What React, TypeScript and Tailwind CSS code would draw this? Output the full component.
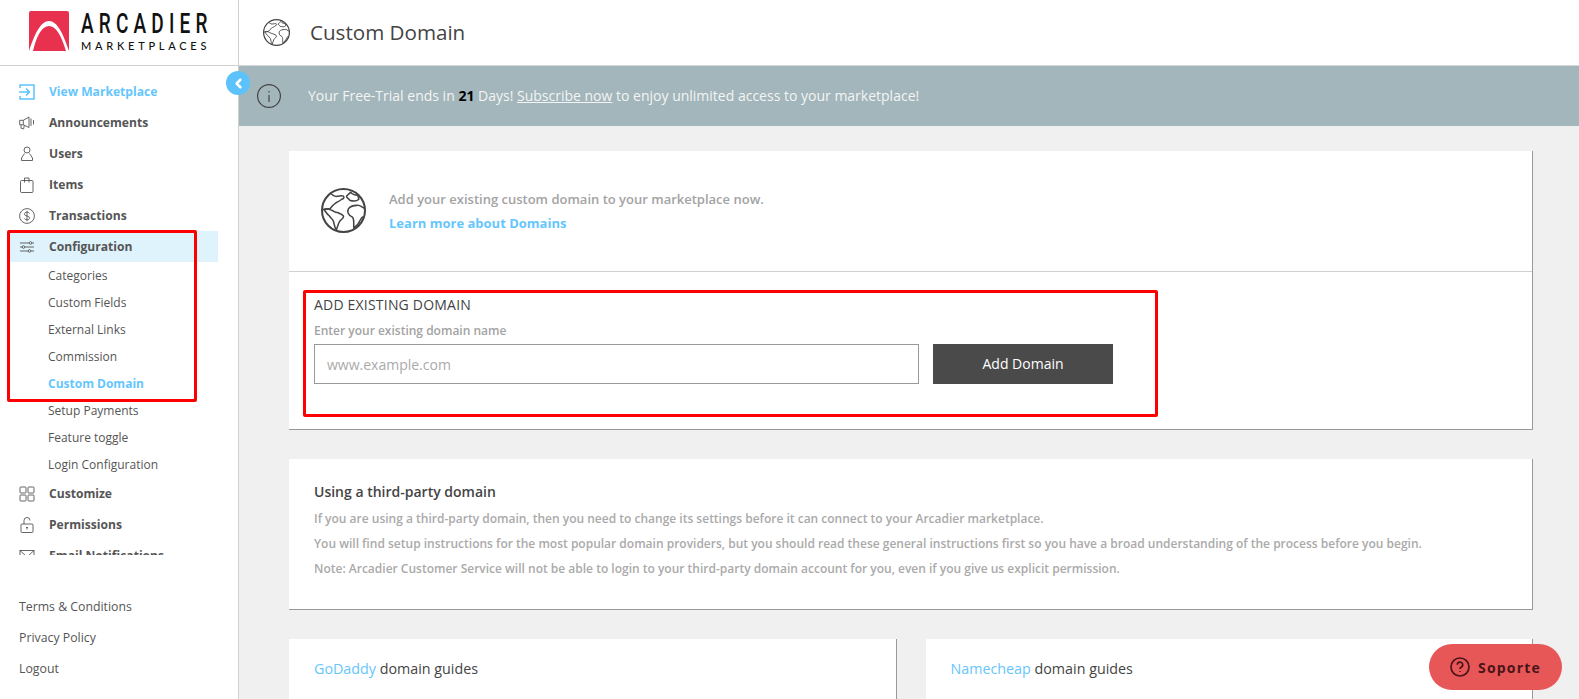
import { ChevronLeft } from "lucide-react";
import type { ReactNode } from "react";

const Icon = ({ children, className = "text-[#555]" }: { children: ReactNode; className?: string }) => (
  <svg viewBox="0 0 16 16" fill="none" stroke="currentColor" strokeWidth="0.9" className={`w-4 h-4 shrink-0 ${className}`}>
    {children}
  </svg>
);

const GlobeIcon = ({ className }: { className: string }) => (
  <svg viewBox="0 0 44 44" fill="none" stroke="#444" strokeLinejoin="round" className={className}>
    <circle cx="22" cy="22" r="21" strokeWidth="2" />
    <path strokeWidth="1.5" d="M10 6c2 1 4 3 6 2 2 0 4-1 6 0 1 1 0 3-2 3-1 2-4 2-6 4-2 1-3 3-5 5-2 1-4 1-7 1" />
    <path strokeWidth="1.5" d="M3 21c3-2 5 0 8 1 2 1 3 2 5 2 2 1 6 2 6 4 0 2-3 3-4 5-1 2-2 5-3 8-2-3-2-6-3-9-1-2-3-3-4-5-2-1-3-3-5-6z" />
    <path strokeWidth="1.5" d="M29 4c2 3 5 3 7 3l1 4c-2 2-6 2-9 1-1-2-3-2-3-4 1-2 3-2 4-4z" />
    <path strokeWidth="1.5" d="M43 20c-3-1-5-4-8-3-3 0-6 1-8 3-2 3 0 7 3 8 2 1 2 3 2 5 0 3 0 5 0 6 3-2 5-4 6-7 1-2 2-3 3-4" />
  </svg>
);

const navTop = [
  {
    label: "Announcements",
    icon: (
      <Icon>
        <path d="M.7 5.3h3.6L10 2v10.5L4.3 9.8H.7z" />
        <path d="M4.3 5.3v4.5M2 9.8v3.4l2.6.8.7-3.7M12 3.5v7.5M14.5 5v4.5" />
      </Icon>
    ),
  },
  {
    label: "Users",
    icon: (
      <Icon>
        <circle cx="8" cy="4" r="3" />
        <path d="M5.5 7.5L2.5 12v2.5h11V12l-3-4.5" />
      </Icon>
    ),
  },
  {
    label: "Items",
    icon: (
      <Icon>
        <rect x="1.5" y="3.5" width="12.5" height="12" rx="1" />
        <path d="M5.5 5.5V1h4.5v4.5" />
      </Icon>
    ),
  },
  {
    label: "Transactions",
    icon: (
      <Icon>
        <circle cx="8" cy="8" r="7.4" />
        <path d="M10.5 5.5C10 4.5 9 4.2 8 4.2c-1.5 0-2.6.8-2.6 1.9 0 2.6 5.2 1.2 5.2 3.8 0 1.1-1.1 1.9-2.6 1.9-1.1 0-2.1-.4-2.6-1.3M8 2.8v10.4" />
      </Icon>
    ),
  },
];

const subItems = ["Categories", "Custom Fields", "External Links", "Commission", "Custom Domain", "Setup Payments", "Feature toggle", "Login Configuration"];

const Row = ({ icon, label, className = "text-[#555]" }: { icon: ReactNode; label: string; className?: string }) => (
  <div className={`flex items-center gap-[14px] h-[31px] pl-[19px] text-[12.1px] font-bold ${className}`}>
    {icon}
    <span className="pt-[2px]">{label}</span>
  </div>
);

const Sidebar = () => (
  <aside className="w-[239px] shrink-0 h-full flex flex-col bg-white border-r border-[#d0d0d0]">
    <div className="h-[66px] shrink-0 flex items-start pl-[29px] pt-[11px] gap-[12px] border-b border-[#d0d0d0]">
      <svg viewBox="0 0 40 40" className="w-10 h-10 shrink-0">
        <path d="M2 0h36a2 2 0 0 1 2 2v38H0V2a2 2 0 0 1 2-2z" fill="#e8304f" />
        <path d="M0 40C6 22 12 10 20 10s14 12 20 30h-3C32 24 27 15 20 15S8 24 4 40z" fill="#fff" />
      </svg>
      <div className="flex flex-col w-[128px] text-[#111]">
        <span className="h-[26px] text-[28px] leading-[26px] tracking-[7.6px] font-medium origin-left scale-x-[0.68] font-['Roboto',sans-serif] whitespace-nowrap">ARCADIER</span>
        <span className="mt-[3px] text-[11px] leading-[12px] tracking-[3.75px] font-medium font-['Lato',sans-serif] whitespace-nowrap">MARKETPLACES</span>
      </div>
    </div>
    <nav className="h-[489px] shrink-0 overflow-hidden pt-[10px]">
      <Row
        label="View Marketplace"
        className="text-[#66c6fc]"
        icon={
          <Icon className="text-[#5cc2fb]">
            <path strokeWidth="1.5" d="M1 4V1h14v14H1v-3M0 8h10M7 4.5L10.5 8 7 11.5" />
          </Icon>
        }
      />
      {navTop.map((item) => (
        <Row key={item.label} label={item.label} icon={item.icon} />
      ))}
      <div className="ml-2 w-[210px] bg-[#def3fc]">
        <div className="-ml-2">
          <Row
            label="Configuration"
            icon={
              <Icon>
                <path d="M1 4h9M13 4h2M1 8h2M6 8h9M1 12h8M12 12h3" />
                <circle cx="11.5" cy="4" r="1.3" />
                <circle cx="4.5" cy="8" r="1.3" />
                <circle cx="10.5" cy="12" r="1.3" />
              </Icon>
            }
          />
        </div>
      </div>
      {subItems.map((item) => (
        <div
          key={item}
          className={`h-[27px] pl-[48px] flex items-center text-[12px] ${item === "Custom Domain" ? "font-bold text-[#66c6fc]" : "text-[#555]"}`}
        >
          {item}
        </div>
      ))}
      <Row
        label="Customize"
        icon={
          <Icon>
            <rect x="1" y="1" width="6" height="6" rx="0.8" />
            <rect x="9" y="1" width="6" height="6" rx="0.8" />
            <rect x="1" y="9" width="6" height="6" rx="0.8" />
            <rect x="9" y="9" width="6" height="6" rx="0.8" />
          </Icon>
        }
      />
      <Row
        label="Permissions"
        icon={
          <Icon>
            <rect x="2" y="7" width="12" height="8.5" rx="1" />
            <path d="M5 7V3.5a3 3 0 0 1 6 0M8 12.5V10.5M7 11l1-1 1 1" />
          </Icon>
        }
      />
      <Row
        label="Email Notifications"
        icon={
          <Icon>
            <rect x="1" y="2.5" width="14" height="11" />
            <path d="M1 2.5l7 6.5 7-6.5" />
          </Icon>
        }
      />
    </nav>
    <div className="pt-[37px] pl-[19px] text-[12.3px] text-[#555]">
      {["Terms & Conditions", "Privacy Policy", "Logout"].map((item) => (
        <div key={item} className="h-[31px] flex items-center">
          {item}
        </div>
      ))}
    </div>
  </aside>
);

const App = () => (
  <div className="relative w-[1579px] h-[699px] overflow-hidden flex bg-[#f0f0f0] font-['Open_Sans',sans-serif]">
    <Sidebar />
    <main className="flex-1 min-w-0 flex flex-col">
      <header className="h-[66px] shrink-0 bg-white border-b border-[#d8d8d8] flex items-center pl-[24px] gap-[20px]">
        <GlobeIcon className="w-[27px] h-[27px]" />
        <h1 className="text-[20.6px] text-[#444]">Custom Domain</h1>
      </header>
      <div className="h-[60px] shrink-0 bg-[#a2b6bb] flex items-center pl-[18px] gap-[27px]">
        <svg viewBox="0 0 24 24" fill="none" stroke="#444" strokeWidth="1.2" className="w-6 h-6 shrink-0">
          <circle cx="12" cy="12" r="11.4" />
          <path d="M12 11v7M12 7v1.4" />
        </svg>
        <p className="text-[14px] text-[#f4f4f4] pb-[2px]">
          Your Free-Trial ends in <b className="text-black">21</b> Days! <span className="underline">Subscribe now</span> to enjoy unlimited access to your marketplace!
        </p>
      </div>
      <div className="pt-[25px] pl-[50px] pr-[46px] flex flex-col gap-[29px]">
        <section className="bg-white border-r border-b border-[#999]">
          <div className="h-[121px] flex items-center pl-[32px] gap-[23px] border-b border-[#d0d0d0]">
            <GlobeIcon className="w-[45px] h-[45px] mb-[2px]" />
            <div className="flex flex-col gap-[5px] mt-[1px] text-[13px] font-semibold">
              <p className="text-[#a3a3a3]">Add your existing custom domain to your marketplace now.</p>
              <p className="text-[#66c6fc] font-bold">Learn more about Domains</p>
            </div>
          </div>
          <div className="h-[157px] pl-[25px] pt-[23px]">
            <h2 className="text-[14px] leading-[20px] font-medium tracking-[0.2px] text-[#444]">ADD EXISTING DOMAIN</h2>
            <p className="mt-[7px] text-[12px] leading-[18px] font-semibold text-[#a3a3a3]">Enter your existing domain name</p>
            <div className="mt-[4px] flex gap-[14px]">
              <div className="w-[605px] h-10 border border-[#999] flex items-center pl-[12px] text-[14px] text-[#aaa]">www.example.com</div>
              <div className="w-[180px] h-10 bg-[#4a4a4a] text-white text-[14px] pb-[2px] flex items-center justify-center">Add Domain</div>
            </div>
          </div>
        </section>
        <section className="h-[151px] bg-white border-r border-b border-[#999] pl-[25px] pt-[22px]">
          <h2 className="text-[14px] leading-[22px] font-semibold text-[#444]">Using a third-party domain</h2>
          <div className="mt-[7px] flex flex-col gap-[7px] text-[12px] leading-[18px] font-semibold text-[#aaa]">
            <p>If you are using a third-party domain, then you need to change its settings before it can connect to your Arcadier marketplace.</p>
            <p>You will find setup instructions for the most popular domain providers, but you should read these general instructions first so you have a broad understanding of the process before you begin.</p>
            <p>Note: Arcadier Customer Service will not be able to login to your third-party domain account for you, even if you give us explicit permission.</p>
          </div>
        </section>
        <div className="grid grid-cols-2 gap-[29px]">
          <section className="h-[80px] bg-white border-r border-[#999] pl-[25px] pt-[19px] text-[14.3px] leading-[22px] text-[#444]">
            <span className="text-[#66c6fc]">GoDaddy</span> domain guides
          </section>
          <section className="h-[80px] bg-white border-r border-[#999] pl-[25px] pt-[19px] text-[14.3px] leading-[22px] text-[#444]">
            <span className="text-[#66c6fc]">Namecheap</span> domain guides
          </section>
        </div>
      </div>
    </main>

    {/* annotation boxes and floating widgets */}
    <div className="absolute left-[7px] top-[230px] w-[190px] h-[172px] border-[3px] border-[#ff0000] rounded-[2px]" />
    <div className="absolute left-[303px] top-[290px] w-[855px] h-[127px] border-[3px] border-[#ff0000] rounded-[2px]" />
    <div className="absolute left-[226px] top-[71px] w-6 h-6 rounded-full bg-[#5cc2fb] flex items-center justify-center text-white">
      <ChevronLeft size={15} strokeWidth={4} />
    </div>
    <div className="absolute left-[1429px] top-[644px] w-[133px] h-[46px] rounded-[23px] bg-[#e85757] flex items-center justify-center gap-[8px] text-[#4a1419]">
      <svg viewBox="0 0 20 20" fill="none" stroke="currentColor" strokeWidth="1.7" className="w-5 h-5">
        <circle cx="10" cy="10" r="9" />
        <path d="M7.3 7.8a2.7 2.7 0 1 1 3.8 2.5c-.8.4-1.1.9-1.1 1.7M10 14v.8" />
      </svg>
      <span className="text-[14px] font-bold tracking-[1.2px]">Soporte</span>
    </div>
  </div>
);

export default App;
